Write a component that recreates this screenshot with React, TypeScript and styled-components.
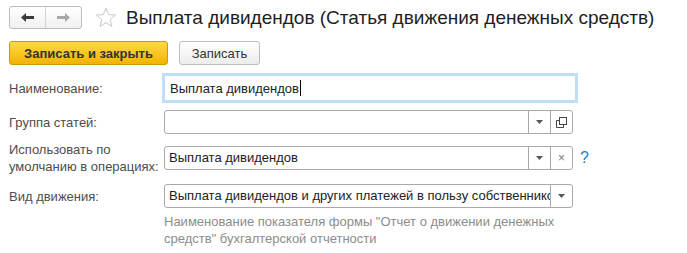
import styled, { createGlobalStyle } from 'styled-components'

const GlobalStyle = createGlobalStyle`
  html, body {
    margin: 0;
    padding: 0;
    background: #ffffff;
  }
  body {
    font-family: Arial, 'Liberation Sans', sans-serif;
    font-size: 13px;
    color: #4d4d4d;
  }
`

const Page = styled.div`
  width: 687px;
  height: 253px;
  padding: 6px 9px 0;
  box-sizing: border-box;
  overflow: hidden;
`

const Header = styled.div`
  display: flex;
  align-items: center;
  height: 23px;
`

const NavGroup = styled.div`
  display: flex;
  width: 73px;
  height: 23px;
  box-sizing: border-box;
  border: 1px solid #bcbcbc;
  border-radius: 3px;
  background: linear-gradient(#ffffff, #f0f0f0);
`

const NavButton = styled.div<{ $first?: boolean }>`
  flex: 1;
  display: flex;
  align-items: center;
  justify-content: center;
  border-right: ${(p) => (p.$first ? '1px solid #d4d4d4' : 'none')};
`

const StarBox = styled.div`
  display: flex;
  margin-left: 13px;
  margin-right: 9px;
`

const Title = styled.div`
  font-size: 19px;
  color: #1e1e1e;
  white-space: nowrap;
  line-height: 23px;
`

const Toolbar = styled.div`
  display: flex;
  gap: 11px;
  margin-top: 12px;
`

const Button = styled.div<{ $primary?: boolean }>`
  height: 24px;
  box-sizing: border-box;
  border-radius: 3px;
  display: flex;
  align-items: center;
  justify-content: center;
  font-size: 13px;
  font-weight: ${(p) => (p.$primary ? 'bold' : 'normal')};
  color: #333333;
  border: 1px solid ${(p) => (p.$primary ? '#c99c00' : '#bdbdbd')};
  background: ${(p) =>
    p.$primary ? 'linear-gradient(#fdd94a, #f3b300)' : 'linear-gradient(#ffffff, #ececec)'};
  width: ${(p) => (p.$primary ? '159px' : '81px')};
`

const Form = styled.div`
  display: flex;
  flex-direction: column;
  margin-top: 8px;
`

const Row = styled.div<{ $h: number; $gap: number }>`
  display: grid;
  grid-template-columns: 153px auto;
  align-items: center;
  height: ${(p) => p.$h}px;
  margin-top: ${(p) => p.$gap}px;
`

const Label = styled.div`
  color: #4d4d4d;
  line-height: 17px;
  padding-top: 1px;
`

const FieldLine = styled.div`
  display: flex;
  align-items: center;
`

const FocusInput = styled.div`
  width: 416px;
  height: 30px;
  box-sizing: border-box;
  border: 3px solid #bfdff6;
  display: flex;
  align-items: center;
  padding-left: 5px;
  color: #222222;
  background: #ffffff;
`

const Caret = styled.span`
  display: inline-block;
  width: 1px;
  height: 16px;
  background: #000000;
  margin-left: 1px;
`

const Combo = styled.div`
  width: 409px;
  height: 24px;
  margin-left: 2px;
  box-sizing: border-box;
  border: 1px solid #a9a9a9;
  border-radius: 3px;
  display: flex;
  background: #ffffff;
`

const ComboText = styled.div`
  flex: 1;
  overflow: hidden;
  white-space: nowrap;
  padding-left: 4px;
  line-height: 22px;
  color: #222222;
`

const ComboButton = styled.div`
  width: 21px;
  border-left: 1px solid #a9a9a9;
  display: flex;
  align-items: center;
  justify-content: center;
  color: #777777;
  font-size: 12px;
`

const Help = styled.a`
  color: #1b7fcc;
  font-size: 16px;
  margin-left: 7px;
  text-decoration: none;
`

const Hint = styled.div`
  margin-left: 155px;
  margin-top: 5px;
  color: #8c8c8c;
  line-height: 17px;
  width: 420px;
`

const DropArrow = () => (
  <svg width="7" height="4" viewBox="0 0 7 4">
    <path d="M0 0 H7 L3.5 4 Z" fill="#555" />
  </svg>
)

const OpenIcon = () => (
  <svg width="11" height="11" viewBox="0 0 11 11" fill="none" stroke="#444" strokeWidth="1">
    <path d="M3.5 3.5 H0.5 V10.5 H7.5 V7.5" />
    <rect x="3.5" y="0.5" width="7" height="7" />
  </svg>
)

const App = () => {
  return (
    <Page>
      <GlobalStyle />
      <Header>
        <NavGroup>
          <NavButton $first>
            <svg width="13" height="9" viewBox="0 0 13 9">
              <path d="M0 4.5 L5 0 V3 H13 V6 H5 V9 Z" fill="#3c3c3c" />
            </svg>
          </NavButton>
          <NavButton>
            <svg width="13" height="9" viewBox="0 0 13 9">
              <path d="M13 4.5 L8 0 V3 H0 V6 H8 V9 Z" fill="#a8a8a8" />
            </svg>
          </NavButton>
        </NavGroup>
        <StarBox>
          <svg width="22" height="21" viewBox="0 0 22 21">
            <path
              d="M11 1 L13.6 7.6 L20.6 8 L15.2 12.5 L16.9 19.5 L11 15.6 L5.1 19.5 L6.8 12.5 L1.4 8 L8.4 7.6 Z"
              fill="none"
              stroke="#c8c8c8"
              strokeWidth="1"
              strokeLinejoin="round"
            />
          </svg>
        </StarBox>
        <Title>Выплата дивидендов (Статья движения денежных средств)</Title>
      </Header>
      <Toolbar>
        <Button $primary>Записать и закрыть</Button>
        <Button>Записать</Button>
      </Toolbar>
      <Form>
        <Row $h={30} $gap={0}>
          <Label>Наименование:</Label>
          <FocusInput>
            Выплата дивидендов
            <Caret />
          </FocusInput>
        </Row>
        <Row $h={24} $gap={7}>
          <Label>Группа статей:</Label>
          <FieldLine>
            <Combo>
              <ComboText />
              <ComboButton>
                <DropArrow />
              </ComboButton>
              <ComboButton>
                <OpenIcon />
              </ComboButton>
            </Combo>
          </FieldLine>
        </Row>
        <Row $h={34} $gap={6}>
          <Label>
            Использовать по
            <br />
            умолчанию в операциях:
          </Label>
          <FieldLine>
            <Combo>
              <ComboText>Выплата дивидендов</ComboText>
              <ComboButton>
                <DropArrow />
              </ComboButton>
              <ComboButton>×</ComboButton>
            </Combo>
            <Help>?</Help>
          </FieldLine>
        </Row>
        <Row $h={24} $gap={10}>
          <Label>Вид движения:</Label>
          <FieldLine>
            <Combo>
              <ComboText>Выплата дивидендов и других платежей в пользу собственникс</ComboText>
              <ComboButton>
                <DropArrow />
              </ComboButton>
            </Combo>
          </FieldLine>
        </Row>
        <Hint>
          Наименование показателя формы "Отчет о движении денежных средств" бухгалтерской отчетности
        </Hint>
      </Form>
    </Page>
  )
}

export default App
